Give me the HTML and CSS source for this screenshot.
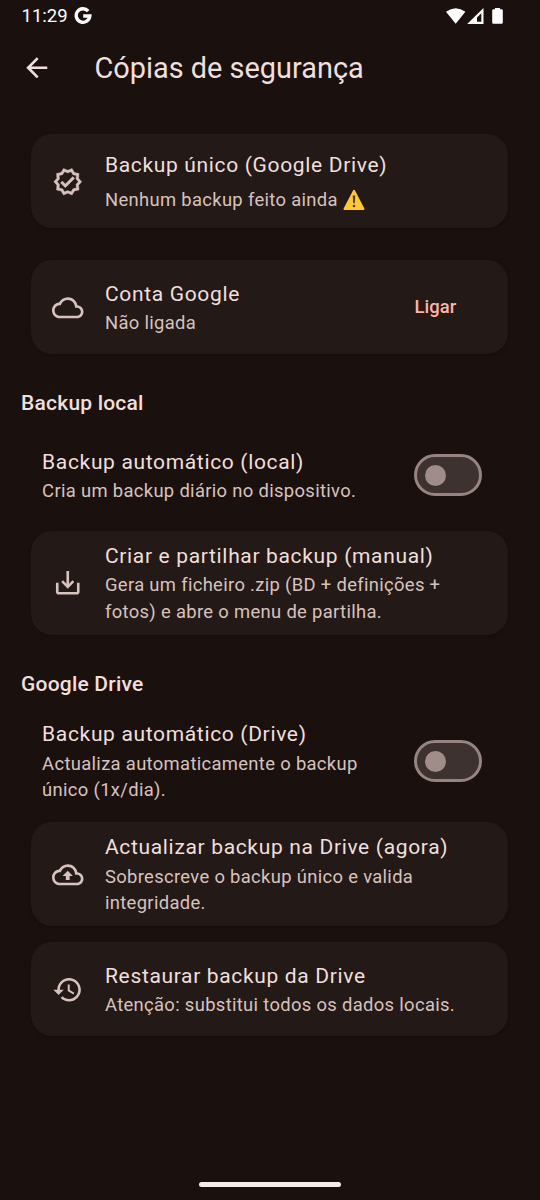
FILE: index.html
```html
<!DOCTYPE html>
<html lang="pt">
<head>
<meta charset="utf-8">
<title>Cópias de segurança</title>
<link rel="stylesheet" href="styles.css">
</head>
<body>
<div class="screen">
  <div class="status">
    <span class="clock">11:29</span>
    <svg class="g-logo" viewBox="0 0 18 18"><path d="M14.2 4.1A6.8 6.8 0 1 0 15.8 9H9.2" /></svg>
    <svg class="signals" viewBox="0 0 58 18">
      <path d="M0 4.8Q9.7-2.4 19.4 4.8L9.7 16.7Z"/>
      <path fill-rule="evenodd" d="M37.5 1v16H21.2ZM35.3 6.2 31 10.5V14.8h4.3Z"/>
      <path d="M49 1h5v1.2h1.5q1.3 0 1.3 1.3v12q0 1.3-1.3 1.3h-8q-1.3 0-1.3-1.3v-12q0-1.3 1.3-1.3H49Z"/>
    </svg>
  </div>
  <header class="appbar">
    <svg class="icon back" viewBox="0 0 24 24"><path d="M20 11H7.83l5.59-5.59L12 4l-8 8 8 8 1.41-1.41L7.83 13H20v-2z"/></svg>
    <h1>Cópias de segurança</h1>
  </header>
  <main>
    <section class="card status-card">
      <svg class="icon verified" viewBox="-0.4 -0.4 24.8 24.8"><path d="M23 11.99l-2.44-2.79.34-3.69-3.61-.82L15.4 1.5 12 2.96 8.6 1.5 6.71 4.69 3.1 5.5l.34 3.7L1 11.99l2.44 2.79-.34 3.7 3.61.82 1.89 3.2 3.4-1.47 3.4 1.46 1.89-3.19 3.61-.82-.34-3.69L23 11.99zm-3.95 1.48l-.56.65.08.85.18 1.95-1.9.43-.84.19-.44.74-.99 1.68-1.78-.77-.8-.34-.79.34-1.78.77-.99-1.67-.44-.74-.84-.19-1.9-.43.18-1.96.08-.85-.56-.65L3.67 12l1.29-1.48.56-.65-.09-.86-.18-1.94 1.9-.43.84-.19.44-.74.99-1.68 1.78.77.8.34.79-.34 1.78-.77.99 1.68.44.74.84.19 1.9.43-.18 1.95-.08.85.56.65 1.29 1.47-1.28 1.48z"/><path d="M10.09 13.75l-2.32-2.33-1.48 1.49 3.8 3.81 7.34-7.36-1.48-1.49z"/></svg>
      <div class="text">
        <h3>Backup único (Google Drive)</h3>
        <p class="with-warning">Nenhum backup feito ainda <svg class="warning" viewBox="0 0 22 22"><path class="sign" d="M11 1.8 20.5 20H1.5Z"/><path class="mark" d="M9.7 6.5h2.6l-.5 7.7h-1.6Z"/><circle class="mark" cx="11" cy="17" r="1.3"/></svg></p>
      </div>
    </section>
    <section class="card account-card">
      <svg class="icon" viewBox="0 0 24 24"><path d="M19.35 10.04C18.67 6.59 15.64 4 12 4 9.11 4 6.6 5.64 5.35 8.04 2.34 8.36 0 10.91 0 14c0 3.31 2.69 6 6 6h13c2.76 0 5-2.24 5-5 0-2.64-2.05-4.78-4.65-4.96zM19 18H6c-2.21 0-4-1.79-4-4s1.79-4 4-4h.71C7.37 7.69 9.48 6 12 6c3.04 0 5.5 2.46 5.5 5.5v.5H19c1.66 0 3 1.34 3 3s-1.34 3-3 3z"/></svg>
      <div class="text">
        <h3>Conta Google</h3>
        <p>Não ligada</p>
      </div>
      <span class="link">Ligar</span>
    </section>

    <h2>Backup local</h2>
    <div class="row row-local">
      <div class="text">
        <h3>Backup automático (local)</h3>
        <p>Cria um backup diário no dispositivo.</p>
      </div>
      <div class="switch"><span class="thumb"></span></div>
    </div>
    <section class="card tall">
      <svg class="icon" viewBox="0 0 24 24"><path d="M19 12v7H5v-7H3v7c0 1.1.9 2 2 2h14c1.1 0 2-.9 2-2v-7h-2zm-6 .67l2.59-2.58L17 11.5l-5 5-5-5 1.41-1.41L11 12.67V3h2v9.67z"/></svg>
      <div class="text">
        <h3>Criar e partilhar backup (manual)</h3>
        <p>Gera um ficheiro .zip (BD + definições +<br>fotos) e abre o menu de partilha.</p>
      </div>
    </section>

    <h2 class="drive-title">Google Drive</h2>
    <div class="row row-drive">
      <div class="text">
        <h3>Backup automático (Drive)</h3>
        <p>Actualiza automaticamente o backup<br>único (1x/dia).</p>
      </div>
      <div class="switch"><span class="thumb"></span></div>
    </div>
    <section class="card tall">
      <svg class="icon" viewBox="0 0 24 24"><path d="M19.35 10.04C18.67 6.59 15.64 4 12 4 9.11 4 6.6 5.64 5.35 8.04 2.34 8.36 0 10.91 0 14c0 3.31 2.69 6 6 6h13c2.76 0 5-2.24 5-5 0-2.64-2.05-4.78-4.65-4.96zM19 18H6c-2.21 0-4-1.79-4-4s1.79-4 4-4h.71C7.37 7.69 9.48 6 12 6c3.04 0 5.5 2.46 5.5 5.5v.5H19c1.66 0 3 1.34 3 3s-1.34 3-3 3z"/><path d="M8 13h2.55v3h2.9v-3H16l-4-4z"/></svg>
      <div class="text">
        <h3>Actualizar backup na Drive (agora)</h3>
        <p>Sobrescreve o backup único e valida<br>integridade.</p>
      </div>
    </section>
    <section class="card restore-card">
      <svg class="icon" viewBox="0 0 24 24"><path d="M13 3c-4.97 0-9 4.03-9 9H1l3.89 3.89.07.14L9 12H6c0-3.87 3.13-7 7-7s7 3.13 7 7-3.13 7-7 7c-1.93 0-3.68-.79-4.94-2.06l-1.42 1.42C8.27 19.99 10.51 21 13 21c4.97 0 9-4.03 9-9s-4.03-9-9-9zm-1 5v5l4.28 2.54.72-1.21-3.5-2.08V8H12z"/></svg>
      <div class="text">
        <h3>Restaurar backup da Drive</h3>
        <p>Atenção: substitui todos os dados locais.</p>
      </div>
    </section>
  </main>
  <div class="home-bar"></div>
</div>
</body>
</html>
```

FILE: styles.css
```css
* {
  box-sizing: border-box;
  margin: 0;
  padding: 0;
}

body {
  background: #1a110f;
  color: #f0dfdc;
  font-family: Roboto, sans-serif;
}

.screen {
  width: 540px;
  height: 1200px;
  display: flex;
  flex-direction: column;
  overflow: hidden;
}

.status {
  height: 32px;
  padding: 0 36px 0 21.5px;
  display: flex;
  align-items: center;
  color: #fff;
}

.clock {
  font-size: 18.5px;
  line-height: 32px;
}

.g-logo {
  width: 18px;
  height: 18px;
  margin-left: 6px;
  fill: none;
  stroke: #fff;
  stroke-width: 3.4;
}

.signals {
  width: 58px;
  height: 18px;
  margin-left: auto;
  fill: #fff;
}

.appbar {
  height: 72px;
  padding-left: 21px;
  display: flex;
  align-items: center;
}

h1 {
  margin-left: 42px;
  font-size: 28.9px;
  font-weight: 400;
  line-height: 37px;
}

.icon {
  width: 31.5px;
  height: 31.5px;
  flex: none;
  fill: #d8c2be;
}

.back {
  fill: #f0dfdc;
}

.verified {
  stroke: #d8c2be;
  stroke-width: 0.3;
}

main {
  flex: 1;
  padding: 30.45px 32px 0 31.1px;
}

.card {
  height: 94px;
  padding: 0 21px;
  display: flex;
  align-items: center;
  gap: 21.4px;
  border-radius: 21px;
  background: #231917;
  box-shadow: 0 1px 3px rgba(0, 0, 0, 0.3);
}

.tall {
  height: 104px;
}

.status-card .text {
  padding-top: 2px;
}

.account-card {
  margin-top: 32px;
}

.restore-card {
  margin-top: 16px;
}

.text {
  white-space: nowrap;
}

h3 {
  font-size: 21px;
  font-weight: 400;
  line-height: 31.5px;
  letter-spacing: 0.66px;
}

p {
  color: #d8c2be;
  font-size: 18.4px;
  line-height: 26.25px;
  letter-spacing: 0.33px;
}

.with-warning {
  display: flex;
  align-items: center;
  gap: 5px;
  height: 34px;
  padding-top: 4px;
}

.warning {
  width: 22px;
  height: 22px;
}

.sign {
  fill: #fcc934;
  stroke: #fcc934;
  stroke-width: 2;
  stroke-linejoin: round;
}

.mark {
  fill: #4d3d33;
}

.link {
  margin: 0 30.5px 0 auto;
  color: #ffb4a9;
  font-size: 18.4px;
  font-weight: 500;
  line-height: 22px;
  letter-spacing: 0.13px;
}

h2 {
  margin: 34px 0 0 -10px;
  font-size: 21px;
  font-weight: 500;
  line-height: 31.5px;
  letter-spacing: 0.2px;
}

.row {
  padding: 0 26px 0 11px;
  display: flex;
  align-items: center;
  justify-content: space-between;
}

.row-local {
  height: 111px;
}

.drive-title {
  margin-top: 34px;
}

.row-drive {
  height: 122px;
}

.switch {
  width: 68px;
  height: 42px;
  padding-left: 7.5px;
  display: flex;
  align-items: center;
  border: 3px solid #978481;
  border-radius: 21px;
  background: #3d322f;
}

.thumb {
  width: 21px;
  height: 21px;
  border-radius: 50%;
  background: #a08c89;
}

.home-bar {
  width: 142px;
  height: 5px;
  margin: 0 auto 13px;
  border-radius: 3px;
  background: #f3ece9;
}
```
